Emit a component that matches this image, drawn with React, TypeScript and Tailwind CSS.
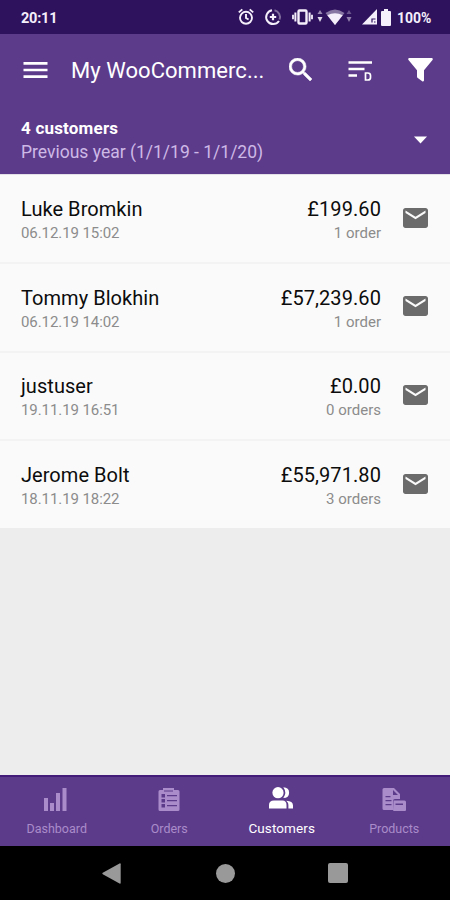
import type { ReactNode } from "react";

interface Customer {
  name: string;
  date: string;
  total: string;
  orders: string;
}

const customers: Customer[] = [
  { name: "Luke Bromkin", date: "06.12.19 15:02", total: "£199.60", orders: "1 order" },
  { name: "Tommy Blokhin", date: "06.12.19 14:02", total: "£57,239.60", orders: "1 order" },
  { name: "justuser", date: "19.11.19 16:51", total: "£0.00", orders: "0 orders" },
  { name: "Jerome Bolt", date: "18.11.19 18:22", total: "£55,971.80", orders: "3 orders" },
];

function DataArrows({ className }: { className: string }) {
  return (
    <svg viewBox="0 0 6 14" className={`h-3.5 w-1.5 ${className}`} fill="currentColor">
      <path d="M3 1l2.5 4h-5z" opacity=".6" />
      <path d="M3 13L.5 8h5z" />
    </svg>
  );
}

function StatusBar() {
  return (
    <div className="flex h-[34px] items-center bg-[#2f125d] pl-[21px] text-[#f4effb]">
      <span className="w-[216px] pt-[3px] text-[14.5px] font-bold tracking-[-0.2px]">20:11</span>
      <svg viewBox="0 0 18 18" className="size-[18px]" fill="none" stroke="currentColor" strokeWidth="1.9">
        <circle cx="9" cy="9.8" r="6" />
        <path d="M9 6v4l2.6 1.5M1.8 4.4L5.3 1.4M16.2 4.4L12.7 1.4" />
      </svg>
      <svg viewBox="0 0 18 18" className="ml-[9px] size-[18px]" fill="none" stroke="currentColor" strokeWidth="2">
        <path d="M8 2.2A7 7 0 1 0 15 13" />
        <path d="M10.5 2.2A7 7 0 0 1 15.5 11.5" opacity=".4" />
        <path d="M9 5.8v6.4M5.8 9h6.4" strokeWidth="2.2" />
      </svg>
      <svg viewBox="0 0 22 18" className="ml-[10px] h-[18px] w-[22px]" fill="none" stroke="currentColor" strokeWidth="2.4">
        <rect x="6.5" y="2.5" width="8" height="13" rx="1" />
        <path d="M3.4 4.5v9M17.6 4.5v9" strokeWidth="2" />
        <path d="M1 6.8v4.4M20 6.8v4.4" strokeWidth="1.8" />
      </svg>
      <DataArrows className="-mt-0.5 ml-[3px] opacity-90" />
      <svg viewBox="0 0 20 17" className="ml-[2px] h-[17px] w-5" fill="currentColor">
        <path d="M10 16L.5 4Q10-3 19.5 4z" opacity=".45" />
        <path d="M10 16L2.3 6.3Q10 2 17.7 6.3z" />
      </svg>
      <DataArrows className="-mt-0.5 ml-[1px] opacity-50" />
      <svg viewBox="0 0 16 16" className="ml-[10px] size-4" fill="currentColor">
        <path d="M15 0v15.5H0z" />
        <path d="M10 13.5V10h3.5M12 13h1.5" fill="none" stroke="#2f125d" strokeWidth="1.2" />
      </svg>
      <svg viewBox="0 0 10 17" className="ml-[3px] h-[17px] w-[10px]" fill="currentColor">
        <path d="M3 0h4v2h2q1 0 1 1v13q0 1-1 1H1q-1 0-1-1V3q0-1 1-1h2z" />
      </svg>
      <span className="ml-[6px] pt-[2px] text-[14px] font-bold">100%</span>
    </div>
  );
}

function Toolbar() {
  return (
    <div className="flex h-[72px] items-center pl-[23px] text-white">
      <svg viewBox="0 0 25 18" className="h-[18px] w-[25px]" stroke="currentColor" strokeWidth="2.7">
        <path d="M.5 2.3h24M.5 9h24M.5 15.7h24" />
      </svg>
      <h1 className="ml-[23px] mt-px w-[212px] whitespace-nowrap text-[22px] tracking-[0.05px]">My WooCommerc...</h1>
      <svg viewBox="3 3 17.5 17.5" className="mb-[2px] ml-[6px] size-[23px]" fill="currentColor" stroke="currentColor" strokeWidth=".4">
        <path d="M15.5 14h-.79l-.28-.27A6.47 6.47 0 0 0 16 9.5 6.5 6.5 0 1 0 9.5 16c1.61 0 3.09-.59 4.23-1.57l.27.28v.79l5 4.99L20.49 19zm-6 0C7.01 14 5 11.99 5 9.5S7.01 5 9.5 5 14 7.01 14 9.5 11.99 14 9.5 14" />
      </svg>
      <svg viewBox="0 0 25 22" className="ml-[36px] mt-[2px] h-[22px] w-[25px]" fill="none" stroke="currentColor">
        <path d="M.5 2.5h23.5M.5 9h16M.5 15.5h8.5" strokeWidth="2.4" />
        <path d="M17.5 13h2.3q2.7 0 2.7 2.6v1.8q0 2.6-2.7 2.6h-2.3z" strokeWidth="1.7" />
      </svg>
      <svg viewBox="0 0 25 24" className="ml-[35px] h-6 w-[25px]" fill="currentColor">
        <path d="M1 0h23q1.3.7.5 2L16 12.3v10.2q-.5 1.5-1.8.8L9.8 20q-.8-.5-.8-1.5v-6.2L.5 2Q-.3.7 1 0z" />
      </svg>
    </div>
  );
}

function PeriodSelector() {
  return (
    <div className="flex h-[68px] justify-between pl-[21px] pr-[23px] pt-[10px] text-white">
      <div className="leading-[24px]">
        <p className="text-[17px] font-bold tracking-[0.2px]">4 customers</p>
        <p className="text-[17.5px] text-[#cdb9e6]">Previous year (1/1/19 - 1/1/20)</p>
      </div>
      <svg viewBox="0 0 13 8" className="mt-[20px] h-2 w-[13px]" fill="currentColor">
        <path d="M0 .5h13L6.5 7.5z" />
      </svg>
    </div>
  );
}

function CustomerRow({ customer }: { customer: Customer }) {
  return (
    <div className="flex h-[88.75px] items-start border-b-2 border-[#f3f3f3] bg-[#fafafa] pl-[21px] pr-[22px] pt-[19.75px] last:h-[87px] last:border-0">
      <div className="flex-1">
        <p className="text-[20px] leading-[28px] tracking-[0.05px] text-[#0c0c0c]">{customer.name}</p>
        <p className="text-[15px] leading-[20px] tracking-[-0.08px] text-[#8c8c8c]">{customer.date}</p>
      </div>
      <div className="text-right">
        <p className="text-[20px] leading-[28px] tracking-[0.08px] text-[#0c0c0c]">{customer.total}</p>
        <p className="text-[15px] leading-[20px] text-[#8c8c8c]">{customer.orders}</p>
      </div>
      <svg viewBox="2 4 20 16" className="ml-[22px] mt-[12.75px] h-[20px] w-[25px]" fill="#6b6b6b">
        <path d="M20 4H4c-1.1 0-1.99.9-1.99 2L2 18c0 1.1.9 2 2 2h16c1.1 0 2-.9 2-2V6c0-1.1-.9-2-2-2m0 4-8 5-8-5V6l8 5 8-5z" />
      </svg>
    </div>
  );
}

function Tab({ label, active, children }: { label: string; active?: boolean; children: ReactNode }) {
  return (
    <div className={`flex flex-1 flex-col items-center pt-[9px] ${active ? "text-white" : "text-[#a98cc9]"}`}>
      <svg viewBox="0 0 26 26" className="size-[26px]" fill="currentColor">
        {children}
      </svg>
      <span className={`ml-px leading-[18px] ${active ? "mt-[7px] text-[13.5px] tracking-[0.1px]" : "mt-[8px] text-[12.5px]"}`}>
        {label}
      </span>
    </div>
  );
}

function BottomTabs() {
  return (
    <nav className="flex h-[71px] border-t-2 border-[#431c79] bg-[#5d3b8b]">
      <Tab label="Dashboard">
        <path d="M1 12h4v13H1zM7 17h4v8H7zM13 7h4v18h-4zM19.5 2h4v23h-4z" />
      </Tab>
      <Tab label="Orders">
        <path
          fillRule="evenodd"
          d="M7 2h11v2h4q1.5 0 1.5 1.5v18q0 1.5-1.5 1.5H4q-1.5 0-1.5-1.5v-18Q2.5 4 4 4h3zM5.5 8v3.5H9V8zM5.5 13v3.5H9V13zM5.5 18v3.5H9V18zM11 9v1.2h10V9zM11 14v1.2h10V14zM11 19v1.2h10V19z"
        />
        <path d="M8 5h9" stroke="#5d3b8b" strokeWidth="1" />
      </Tab>
      <Tab label="Customers" active>
        <ellipse cx="10" cy="6.7" rx="5.6" ry="5.6" />
        <path d="M15.3 1.3q5.8.2 5.8 5.4t-5.8 5.4q4-5.4 0-10.8M1 22.5V19q0-4.5 5-4.5h8.5q4 0 4 4.5v3.5zM18.3 14.8q6.7.3 6.7 4.7v3h-4.6V19q0-2.3-2.1-4.2" />
      </Tab>
      <Tab label="Products">
        <path
          fillRule="evenodd"
          d="M3 2h10l6 6v5h-5q-2 0-2 2v9H3q-1.5 0-1.5-1.5v-19Q1.5 2 3 2m9 2v5h5zM4.5 10v1.2h5V10zM4.5 14v1.2h6V14zM4.5 18v1.2h6V18z"
        />
        <path fillRule="evenodd" d="M12.5 14.5h11q1.5 0 1.5 1.5v8q0 1-1 1H13q-1 0-1-1zM14.5 17.5V19H22v-1.5z" />
      </Tab>
    </nav>
  );
}

function SystemNav() {
  return (
    <div className="flex h-[54px] items-center bg-black pl-[102px] text-[#999]">
      <svg viewBox="0 0 19 21" className="h-[21px] w-[19px]" fill="currentColor">
        <path d="M.8 9.8L17.5.5q1.2-.5 1.2.8v18.4q0 1.3-1.2.8L.8 11.2q-1-.7 0-1.4z" />
      </svg>
      <div className="ml-[95px] size-[19px] rounded-full bg-[#999]" />
      <div className="ml-[93px] size-[20px] rounded-[2px] bg-[#999]" />
    </div>
  );
}

export default function App() {
  return (
    <div className="flex h-[900px] w-[450px] flex-col overflow-hidden bg-[#ededed] font-['Roboto',sans-serif]">
      <StatusBar />
      <header className="bg-[#5d3b8b]">
        <Toolbar />
        <PeriodSelector />
      </header>
      <main className="flex-1 border-t border-[#e3e0e7]">
        {customers.map((c) => (
          <CustomerRow key={c.name} customer={c} />
        ))}
      </main>
      <BottomTabs />
      <SystemNav />
    </div>
  );
}
